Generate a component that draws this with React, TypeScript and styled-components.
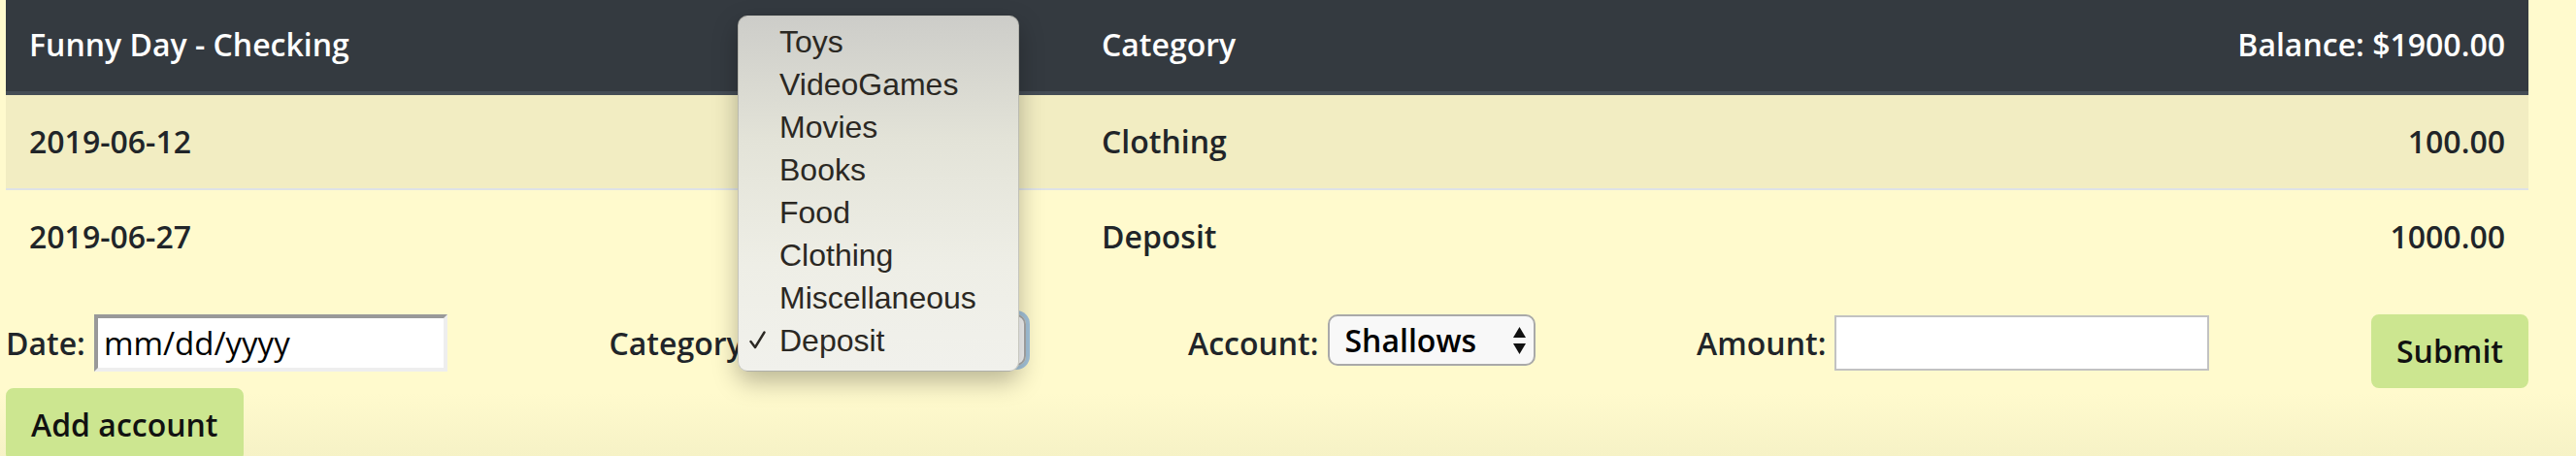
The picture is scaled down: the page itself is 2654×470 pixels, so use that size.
import React from 'react';
import styled, { createGlobalStyle } from 'styled-components';

const GlobalStyle = createGlobalStyle`
    html, body {
        margin: 0;
        padding: 0;
    }
    body {
        min-height: 470px;
        overflow: hidden;
        background: linear-gradient(#fffacd 0, #fffacd 405px, #f6f2c6 470px);
        font-family: "Open Sans", sans-serif;
        color: #212529;
    }
`;

const Page = styled.div`
    position: relative;
    width: 2599px;
    padding-left: 6px;
`;

const Table = styled.table`
    width: 100%;
    border-collapse: collapse;
    margin-bottom: 32px;
    font-size: 32px;
    line-height: 48px;
`;

const HeadCell = styled.th<{ $align?: string }>`
    background: #343a40;
    color: #fff;
    font-weight: 600;
    text-align: ${p => p.$align || 'left'};
    padding: 22px 24px 24px;
    border-bottom: 4px solid #454d55;
`;

const Row = styled.tr<{ $striped?: boolean; $divided?: boolean }>`
    background: ${p => (p.$striped ? 'rgba(0, 0, 0, 0.05)' : 'transparent')};
    & > td {
        border-top: ${p => (p.$divided ? '2px solid #dee2e6' : 'none')};
    }
`;

const Cell = styled.td<{ $align?: string }>`
    font-weight: 600;
    text-align: ${p => p.$align || 'left'};
    padding: 24px;
`;

const Form = styled.form`
    display: flex;
    justify-content: space-between;
    align-items: flex-start;
    margin: 0;
`;

const Field = styled.div`
    display: flex;
    align-items: center;
    gap: 9px;
    height: 59px;
`;

const Label = styled.label`
    font-size: 32px;
    font-weight: 600;
    line-height: 48px;
`;

const DateInput = styled.input`
    box-sizing: border-box;
    width: 364px;
    height: 59px;
    padding: 0 6px;
    border-style: solid;
    border-width: 4px;
    border-color: #999 #eee #eee #999;
    background: #fff;
    font-family: "Open Sans", sans-serif;
    font-size: 33px;
    color: #000;
    outline: none;
`;

const AmountInput = styled.input`
    box-sizing: border-box;
    width: 386px;
    height: 57px;
    border: 2px solid #c2c2c2;
    background: #fff;
    outline: none;
`;

const SelectBox = styled.div<{ $width: number; $focused?: boolean }>`
    position: relative;
    width: ${p => p.$width}px;
    height: 53px;
    margin-top: -6px;
    border-radius: 10px;
    box-shadow: ${p => (p.$focused ? '0 0 0 4px rgba(90, 150, 230, 0.55)' : 'none')};
`;

const NativeSelect = styled.select`
    appearance: none;
    box-sizing: border-box;
    width: 100%;
    height: 100%;
    padding: 0 40px 0 16px;
    border: 2px solid #a9a9a9;
    border-radius: 10px;
    background: #f8f8f8;
    font-family: "Open Sans", sans-serif;
    font-size: 32px;
    font-weight: 600;
    color: #000;
    outline: none;
`;

const Arrows = styled.svg`
    position: absolute;
    right: 10px;
    top: 13px;
    pointer-events: none;
`;

const Button = styled.button`
    box-sizing: border-box;
    height: 76px;
    padding: 12px 24px;
    border: 2px solid #cce690;
    border-radius: 8px;
    background: #cce690;
    font-family: "Open Sans", sans-serif;
    font-size: 32px;
    font-weight: 600;
    line-height: 48px;
    color: #111;
`;

const Popup = styled.div`
    position: absolute;
    left: 760px;
    top: 16px;
    width: 290px;
    height: 367px;
    box-sizing: border-box;
    padding: 4px 0 11px;
    border-radius: 10px;
    border: 1px solid rgba(120, 120, 110, 0.35);
    background: linear-gradient(#cdcdc9 0%, #e3e3d8 35%, #eeeee6 70%, #f1f1ec 100%);
    box-shadow: 0 10px 26px rgba(0, 0, 0, 0.28);
    font-family: "Liberation Sans", Arial, sans-serif;
    font-size: 32px;
    color: #2b2823;
`;

const Option = styled.div`
    position: relative;
    height: 44px;
    line-height: 44px;
    padding-left: 42px;
    white-space: nowrap;
`;

const Check = styled.svg`
    position: absolute;
    left: 11px;
    top: 12px;
`;

const rows = [
    { date: '2019-06-12', category: 'Clothing', amount: '100.00' },
    { date: '2019-06-27', category: 'Deposit', amount: '1000.00' },
];

const categories = ['Toys', 'VideoGames', 'Movies', 'Books', 'Food', 'Clothing', 'Miscellaneous', 'Deposit'];

const UpDown = () => (
    <Arrows width="13" height="28" viewBox="0 0 13 28">
        <path d="M6.5 0 L13 11 L0 11 Z" fill="#111" />
        <path d="M0 17 L13 17 L6.5 28 Z" fill="#111" />
    </Arrows>
);

const App = () => {
    return (
        <Page>
            <GlobalStyle />
            <Table>
                <colgroup>
                    <col style={{ width: 1105 }} />
                    <col style={{ width: 700 }} />
                    <col />
                </colgroup>
                <thead>
                    <tr>
                        <HeadCell>Funny Day - Checking</HeadCell>
                        <HeadCell>Category</HeadCell>
                        <HeadCell $align="right">Balance: $1900.00</HeadCell>
                    </tr>
                </thead>
                <tbody>
                    {rows.map((r, i) => (
                        <Row key={r.date} $striped={i % 2 === 0} $divided={i > 0}>
                            <Cell>{r.date}</Cell>
                            <Cell>{r.category}</Cell>
                            <Cell $align="right">{r.amount}</Cell>
                        </Row>
                    ))}
                </tbody>
            </Table>

            <Form onSubmit={e => e.preventDefault()}>
                <Field>
                    <Label>Date:</Label>
                    <DateInput type="text" defaultValue="mm/dd/yyyy" readOnly />
                </Field>
                <Field>
                    <Label>Category:</Label>
                    <SelectBox $width={274} $focused>
                        <NativeSelect defaultValue="Deposit">
                            {categories.map(c => <option key={c}>{c}</option>)}
                        </NativeSelect>
                        <UpDown />
                    </SelectBox>
                </Field>
                <Field>
                    <Label>Account:</Label>
                    <SelectBox $width={214}>
                        <NativeSelect defaultValue="Shallows">
                            <option>Shallows</option>
                        </NativeSelect>
                        <UpDown />
                    </SelectBox>
                </Field>
                <Field>
                    <Label>Amount:</Label>
                    <AmountInput type="text" />
                </Field>
                <Button type="submit">Submit</Button>
            </Form>
            <Button type="button">Add account</Button>

            <Popup>
                {categories.map(c => (
                    <Option key={c}>
                        {c === 'Deposit' && (
                            <Check width="17" height="19" viewBox="0 0 17 19">
                                <path d="M1.5 11 L6 17 L15.5 1.5" fill="none" stroke="#2b2823" strokeWidth="2.4" strokeLinecap="round" strokeLinejoin="round" />
                            </Check>
                        )}
                        {c}
                    </Option>
                ))}
            </Popup>
        </Page>
    );
};

export default App;
